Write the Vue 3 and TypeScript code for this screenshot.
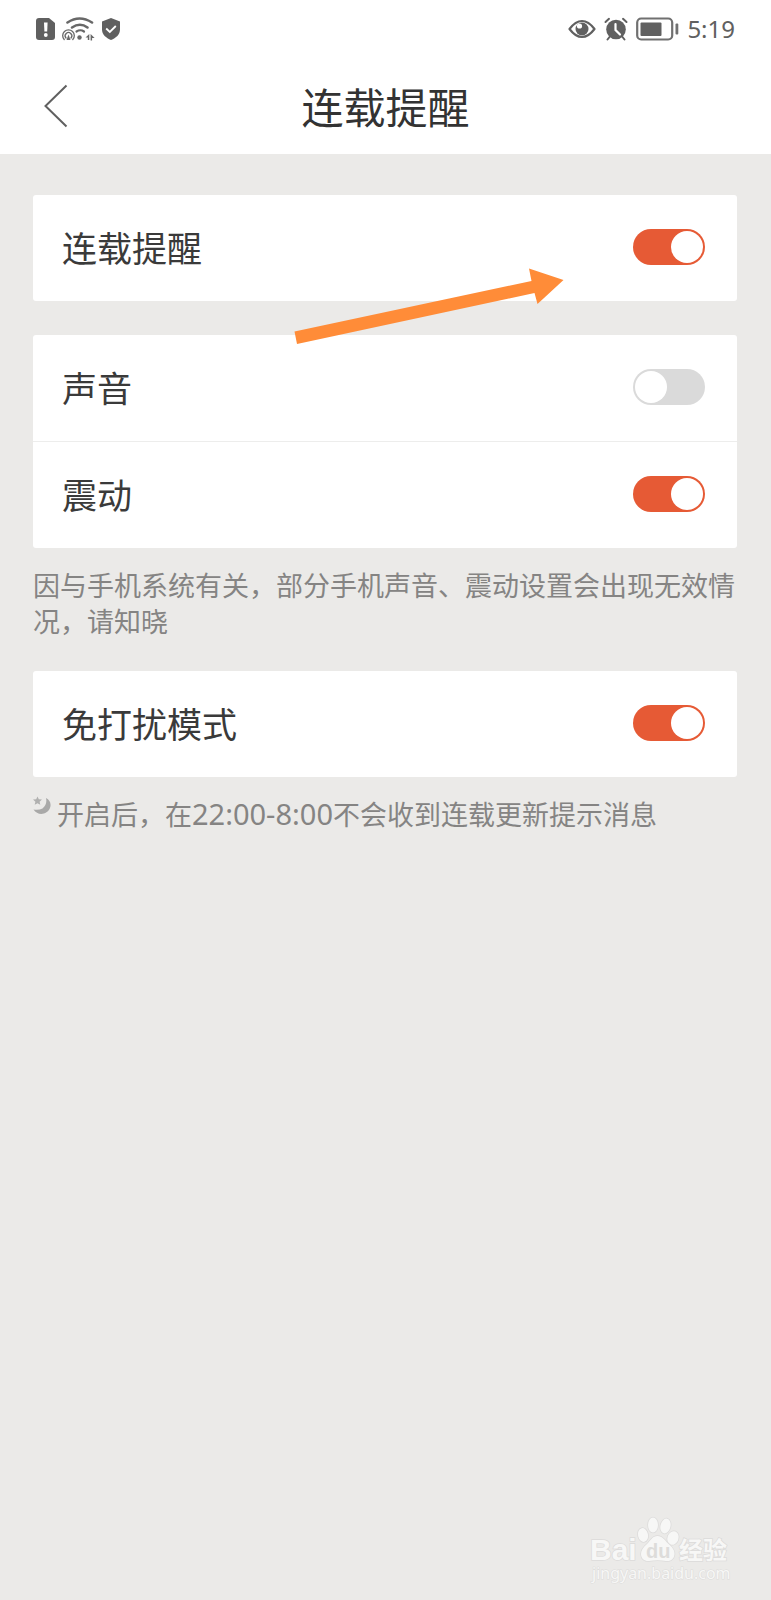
<script setup lang="ts">
import { reactive } from 'vue'

interface Setting {
  id: string
  label: string
  on: boolean
}

interface Group {
  id: string
  rows: Setting[]
}

const serial = reactive<Group>({
  id: 'serial',
  rows: [{ id: 'serial-reminder', label: '连载提醒', on: true }],
})

const alerts = reactive<Group>({
  id: 'alerts',
  rows: [
    { id: 'sound', label: '声音', on: false },
    { id: 'vibration', label: '震动', on: true },
  ],
})

const quiet = reactive<Group>({
  id: 'quiet',
  rows: [{ id: 'do-not-disturb', label: '免打扰模式', on: true }],
})
</script>

<template>
  <div class="page">
    <header class="top">
      <div class="status">
        <div class="status-side">
          <svg width="20" height="24" viewBox="0 0 20 24" aria-hidden="true">
            <path d="M3 1h10l6 5v14a3 3 0 0 1-3 3H3a3 3 0 0 1-3-3V4a3 3 0 0 1 3-3z" fill="#606060" />
            <path d="M8 5.500h3.600l-.4 9H8.400z" fill="#fff" />
            <circle cx="9.800" cy="18" r="1.900" fill="#fff" />
          </svg>
          <svg width="33" height="24" viewBox="0 0 33 24" aria-hidden="true">
            <g fill="none" stroke="#686868" stroke-linecap="round">
              <path d="M5.500 5.500q12-8 24.500 0" stroke-width="2.600" />
              <path d="M10 10.500q8-5.500 15.500 0" stroke-width="2.600" />
              <path d="M14.500 14.500q4-2.500 7.500 0" stroke-width="2.200" />
              <path d="M2.200 22.500a5.800 5.800 0 1 1 8.600 0" stroke-width="1.300" />
              <path d="M4 21a3.300 3.300 0 1 1 5 0" stroke-width="1.300" />
            </g>
            <path d="M6.500 17.500l2 5.500h-4z" fill="#686868" />
            <circle cx="17.500" cy="20.500" r="2.200" fill="#686868" />
            <path d="M23.500 20.500l3.800-3.500v6h-1.500v-2.500zM28.600 17l4 4h-2.500v2.500h-1.500z" fill="#686868" />
          </svg>
          <svg width="20" height="24" viewBox="0 0 20 24" aria-hidden="true">
            <path d="M10 1l9 3.500v8c0 5-4 8.500-9 10.500-5-2-9-5.500-9-10.500v-8z" fill="#606060" />
            <path d="M5.200 11.500l3.600 3.500 6-6" fill="none" stroke="#fff" stroke-width="1.800" />
          </svg>
        </div>
        <div class="status-side status-right">
          <svg width="28" height="24" viewBox="0 0 28 24" aria-hidden="true">
            <path d="M1.500 12Q7.500 4 14 4t12.500 8Q20.500 20 14 20T1.500 12z" fill="#fff" stroke="#606060" stroke-width="2.200" stroke-linejoin="round" />
            <circle cx="14" cy="12" r="6.500" fill="#606060" />
            <circle cx="11.500" cy="9" r="2.600" fill="#fff" />
          </svg>
          <svg width="24" height="24" viewBox="0 0 24 24" aria-hidden="true">
            <circle cx="12" cy="12.500" r="9.800" fill="#606060" />
            <path d="M1.500 5l3.500-3.200M22.500 5L19 1.800M5.500 20l-2 2.500M18.500 20l2 2.500" stroke="#606060" stroke-width="2" stroke-linecap="round" />
            <path d="M11.500 7v6l4.500 4.500" fill="none" stroke="#fff" stroke-width="2.200" stroke-linecap="round" />
          </svg>
          <svg width="43" height="24" viewBox="0 0 43 24" aria-hidden="true">
            <rect x="1.200" y="1.500" width="35" height="21" rx="4" fill="#fff" stroke="#707070" stroke-width="2.200" />
            <rect x="4.500" y="5.500" width="21" height="13.500" rx="1" fill="#606060" />
            <rect x="39.500" y="6.500" width="2.800" height="11" rx="1" fill="#707070" />
          </svg>
          <time class="clock">5:19</time>
        </div>
      </div>
      <div class="nav">
        <button class="back" type="button" aria-label="返回">
          <svg width="24" height="44" viewBox="0 0 24 44" aria-hidden="true">
            <path d="M22.500 1.500L1.500 22l21 20.500" fill="none" stroke="#606060" stroke-width="2" />
          </svg>
        </button>
        <h1 class="title">连载提醒</h1>
      </div>
    </header>

    <main class="content">
      <section class="card">
        <label v-for="row in serial.rows" :key="row.id" class="row" :for="row.id">
          <span>{{ row.label }}</span>
          <input :id="row.id" v-model="row.on" class="switch" type="checkbox" role="switch" />
        </label>
        <svg class="pointer" width="270" height="78" viewBox="0 0 270 78" aria-hidden="true">
          <path d="M0.500 64.500L237.500 14L235 1.500L269.500 13L243.500 37L240.500 26L3 77z" fill="#ff8c38" />
        </svg>
      </section>

      <section class="card">
        <label v-for="row in alerts.rows" :key="row.id" class="row" :for="row.id">
          <span>{{ row.label }}</span>
          <input :id="row.id" v-model="row.on" class="switch" type="checkbox" role="switch" />
        </label>
      </section>
      <p class="note">因与手机系统有关，部分手机声音、震动设置会出现无效情况，请知晓</p>

      <section class="card">
        <label v-for="row in quiet.rows" :key="row.id" class="row" :for="row.id">
          <span>{{ row.label }}</span>
          <input :id="row.id" v-model="row.on" class="switch" type="checkbox" role="switch" />
        </label>
      </section>
      <p class="note note-quiet">
        <svg class="moon" width="20" height="20" viewBox="0 0 20 20" aria-hidden="true">
          <path d="M13 2C17 4 18.500 8 17 12C14.500 18.500 5 20.500 0.500 13.500Q5.500 14.500 9.500 12.500Q14.500 8.500 13 2z" fill="#a9a9a8" />
          <path d="M4.500 .5l1.300 2.800 3.200.3-2.400 2.100.7 3.100-2.800-1.600-2.800 1.600.7-3.100L0 3.600l3.200-.3z" fill="#b0b0af" />
        </svg>
        <span>开启后，在<span class="hours">22:00-8:00</span>不会收到连载更新提示消息</span>
      </p>
    </main>

    <footer class="watermark">
      <svg width="144" height="72" viewBox="0 0 144 72" role="img" aria-label="Baidu 经验 jingyan.baidu.com">
        <g fill="#f7f7f6" stroke="#dcdbda" stroke-width="1.500" paint-order="stroke">
          <text class="brand" x="1" y="46">Bai</text>
          <ellipse cx="54" cy="21" rx="5" ry="7" transform="rotate(-12 54 21)" />
          <ellipse cx="64" cy="11" rx="5" ry="7.500" />
          <ellipse cx="76.500" cy="12" rx="5" ry="7.500" transform="rotate(14 76.500 12)" />
          <ellipse cx="84" cy="24" rx="5.500" ry="7" transform="rotate(20 84 24)" />
          <path d="M68.500 22c5 0 7 4 10.500 7.500 4 3.500 7 6.500 6.500 11-.5 5-4.500 7-8.500 6.500-6-1-11-1-17 0-4 .5-8-2-8-7 0-4 2.500-7 6-10 3.500-3.500 5.500-8 10.500-8z" />
          <text class="experience" x="90" y="45">经验</text>
        </g>
        <text class="du" x="57" y="44">du</text>
        <text class="site" x="3" y="65">jingyan.baidu.com</text>
      </svg>
    </footer>
  </div>
</template>

<style>
body {
  margin: 0;
  background: #ebeae8;
}
</style>

<style scoped>
.page {
  box-sizing: border-box;
  display: flex;
  flex-direction: column;
  min-height: 100vh;
  background: #ebeae8;
  color: #3a3a3a;
  font-family: "Noto Sans CJK SC", sans-serif;
}

.top {
  background: #fff;
}

.status {
  display: flex;
  align-items: center;
  justify-content: space-between;
  height: 58px;
  padding: 0 36px;
}

.status-side {
  display: flex;
  align-items: center;
  gap: 6px;
}

.status-right {
  gap: 8px;
}

.clock {
  color: #606060;
  font-family: "Noto Sans", sans-serif;
  font-size: 24px;
  line-height: 32px;
}

.nav {
  display: grid;
  grid-template-columns: 60px 1fr 60px;
  align-items: center;
  height: 96px;
  padding: 0 32px;
}

.back {
  display: flex;
  align-items: center;
  width: 60px;
  height: 60px;
  padding: 0 12px;
  border: 0;
  background: none;
  cursor: pointer;
}

.title {
  margin: 0;
  color: #333;
  font-size: 42px;
  font-weight: 400;
  line-height: 60px;
  text-align: center;
}

.content {
  padding: 41px 34px 0 33px;
}

.card {
  position: relative;
  margin-bottom: 34px;
  border-radius: 3px;
  background: #fff;
}

.row {
  display: flex;
  align-items: center;
  justify-content: space-between;
  box-sizing: border-box;
  height: 106px;
  padding: 0 32px 2px 29px;
  font-size: 35px;
  line-height: 52px;
}

.row + .row {
  height: 107px;
  border-top: 1px solid #ededec;
}

.switch {
  appearance: none;
  flex: none;
  width: 72px;
  height: 36px;
  margin: 0;
  padding: 2px;
  box-sizing: border-box;
  border-radius: 18px;
  background: #dadada;
  cursor: pointer;
}

.switch::before {
  content: "";
  display: block;
  width: 32px;
  height: 32px;
  border-radius: 50%;
  background: #fff;
}

.switch:checked {
  background: #e65a35;
}

.switch:checked::before {
  margin-left: auto;
}

.pointer {
  position: absolute;
  z-index: 1;
  top: 72px;
  left: 261px;
  pointer-events: none;
}

.note {
  margin: -15px 0 32px;
  color: #858483;
  font-size: 27px;
  line-height: 36px;
}

.note-quiet {
  display: flex;
  gap: 4px;
}

.moon {
  flex: none;
}

.hours {
  font-family: "Noto Sans", sans-serif;
  font-size: 29px;
  line-height: 32px;
}

.watermark {
  display: flex;
  justify-content: flex-end;
  margin-top: auto;
  padding: 0 38px 14px 0;
}

.brand {
  font-family: "Liberation Sans", sans-serif;
  font-size: 30px;
  font-weight: 700;
}

.experience {
  font-size: 24px;
  font-weight: 700;
}

.du {
  fill: #dddcda;
  font-family: "Liberation Sans", sans-serif;
  font-size: 20px;
  font-weight: 700;
}

.site {
  fill: #f7f7f6;
  stroke: #dcdbda;
  stroke-width: 1px;
  paint-order: stroke;
  font-family: "Noto Sans", sans-serif;
  font-size: 16px;
}
</style>
